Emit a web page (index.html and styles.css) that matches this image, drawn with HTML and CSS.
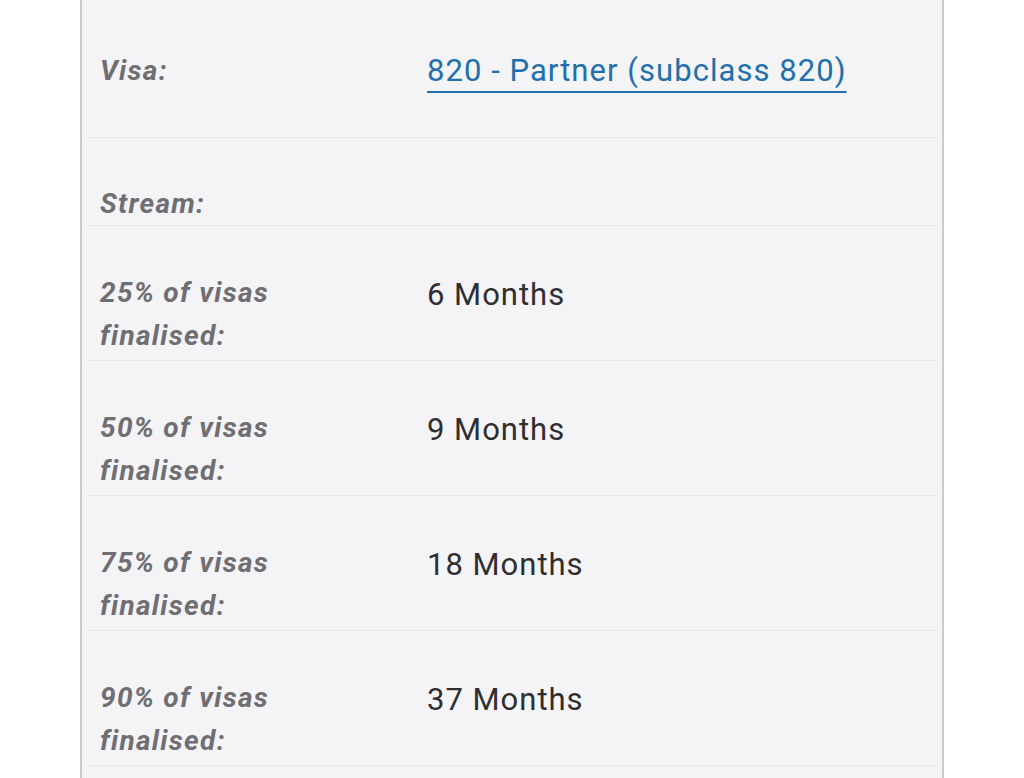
FILE: index.html
```html
<!DOCTYPE html>
<html lang="en">
<head>
<meta charset="utf-8">
<title>Visa processing times</title>
<link rel="stylesheet" href="styles.css">
</head>
<body>
<div class="panel">
  <div class="row row--visa">
    <div class="label">Visa:</div>
    <div class="value"><a class="link" href="#">820 - Partner (subclass 820)</a></div>
  </div>
  <div class="row row--single">
    <div class="label">Stream:</div>
    <div class="value"></div>
  </div>
  <div class="row">
    <div class="label">25% of visas<br>finalised:</div>
    <div class="value">6 Months</div>
  </div>
  <div class="row">
    <div class="label">50% of visas<br>finalised:</div>
    <div class="value">9 Months</div>
  </div>
  <div class="row">
    <div class="label">75% of visas<br>finalised:</div>
    <div class="value">18 Months</div>
  </div>
  <div class="row">
    <div class="label">90% of visas<br>finalised:</div>
    <div class="value">37 Months</div>
  </div>
  <div class="row row--tail"></div>
</div>
</body>
</html>
```

FILE: styles.css
```css
html, body {
  margin: 0;
  padding: 0;
  background: #ffffff;
}

body {
  font-family: Roboto, "Liberation Sans", sans-serif;
  overflow: hidden;
  height: 778px;
}

.panel {
  box-sizing: border-box;
  width: 864px;
  margin: 0 auto;
  min-height: 778px;
  background: #f4f3f6;
  border-left: 2px solid #cbcacd;
  border-right: 2px solid #cbcacd;
}

.row {
  display: grid;
  grid-template-columns: 327px 1fr;
  margin: 0 3px 0 5px;
  padding: 45px 0 3px 13px;
  border-bottom: 1px solid #e9e8ec;
}

.row--visa {
  padding-top: 49px;
  padding-bottom: 45px;
}

.row--single {
  padding-top: 44px;
  padding-bottom: 0;
}

.row--tail {
  border-bottom: none;
  height: 40px;
}

.label {
  font-size: 28px;
  line-height: 43px;
  font-weight: 700;
  font-style: italic;
  letter-spacing: 1.3px;
  color: #6f6e72;
}

.value {
  font-size: 31px;
  line-height: 43px;
  padding-top: 2px;
  letter-spacing: 1px;
  color: #2f2e31;
}

.row--visa .value {
  padding-top: 0;
}

.link {
  color: #2170ab;
  letter-spacing: 1.05px;
  text-decoration: underline;
  text-decoration-thickness: 2px;
  text-underline-offset: 10px;
}
```
